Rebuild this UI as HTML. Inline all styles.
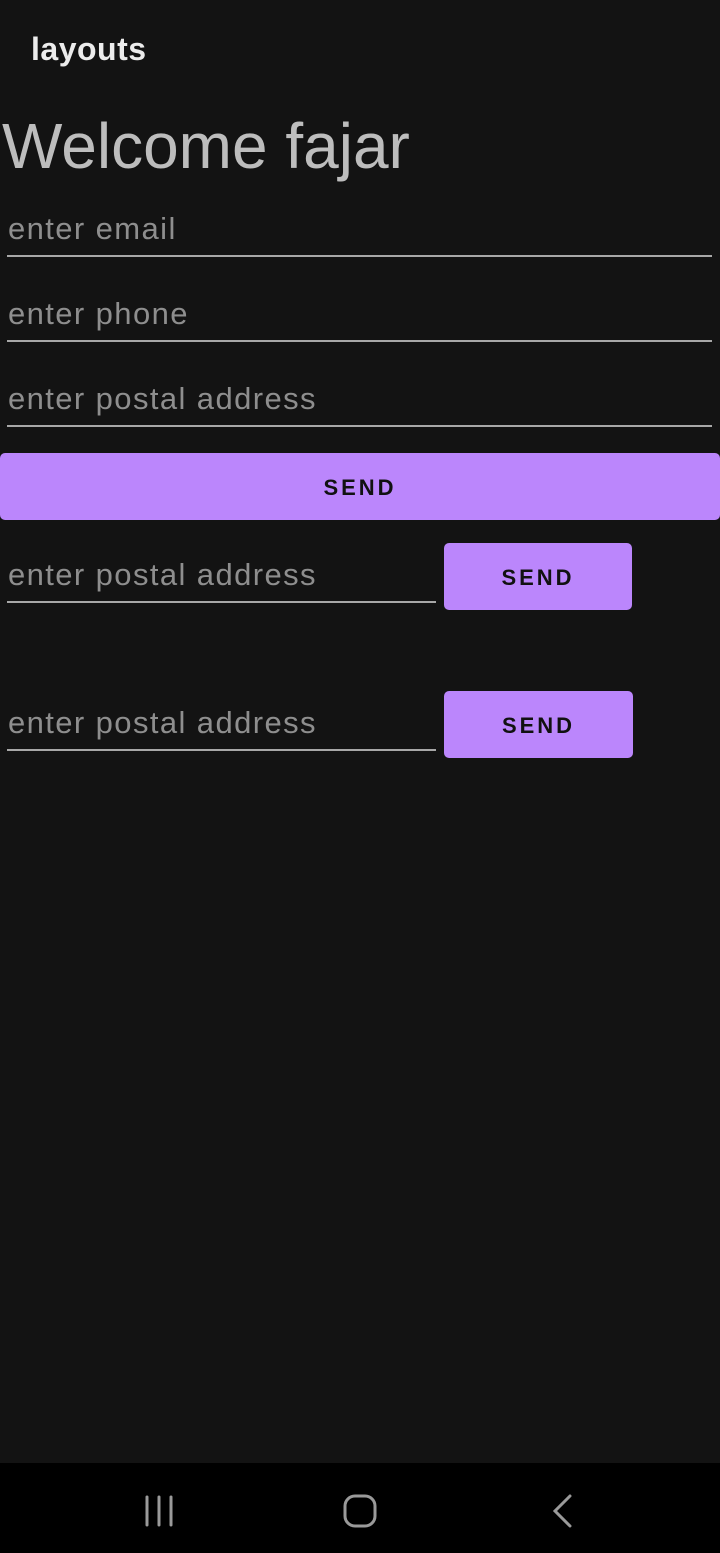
<!DOCTYPE html>
<html><head><style>
body{margin:0;width:720px;height:1553px;background:#131313;position:relative;overflow:hidden;font-family:"Liberation Sans",sans-serif}
.a{position:absolute;white-space:nowrap}
.h{color:#8e8e8e;font-size:31px;left:8px;letter-spacing:1.4px}
.l{position:absolute;height:2px;background:#a8a8a8;left:7px}
.b{position:absolute;background:#bb86fc;border-radius:5px;color:#111;font-size:22px;letter-spacing:3px;text-align:center;font-weight:bold}
</style></head><body>
<div class="a" style="left:31px;top:31px;font-size:32px;color:#ececec;font-weight:bold;letter-spacing:0.5px">layouts</div>
<div class="a" style="left:2px;top:109px;font-size:64px;color:#bdbdbd">Welcome fajar</div>
<div class="a h" style="top:211px">enter email</div><div class="l" style="top:255px;width:705px"></div>
<div class="a h" style="top:296px">enter phone</div><div class="l" style="top:340px;width:705px"></div>
<div class="a h" style="top:381px">enter postal address</div><div class="l" style="top:425px;width:705px"></div>
<div class="b" style="left:0;top:453px;width:720px;height:67px;line-height:69px">SEND</div>
<div class="a h" style="top:557px">enter postal address</div><div class="l" style="top:601px;width:429px"></div>
<div class="b" style="left:444px;top:543px;width:188px;height:67px;line-height:69px">SEND</div>
<div class="a h" style="top:705px">enter postal address</div><div class="l" style="top:749px;width:429px"></div>
<div class="b" style="left:444px;top:691px;width:189px;height:67px;line-height:69px">SEND</div>
<div style="position:absolute;left:0;top:1463px;width:720px;height:90px;background:#000">
<svg width="720" height="90" style="position:absolute;left:0;top:0" fill="none" stroke="#9a9a9a" stroke-width="3" stroke-linecap="round">
<path d="M147 34V62M159 34V62M171 34V62"/>
<rect x="345" y="33" width="30" height="30" rx="10"/>
<path d="M570 33L555 48L570 63"/>
</svg></div>
</body></html>
